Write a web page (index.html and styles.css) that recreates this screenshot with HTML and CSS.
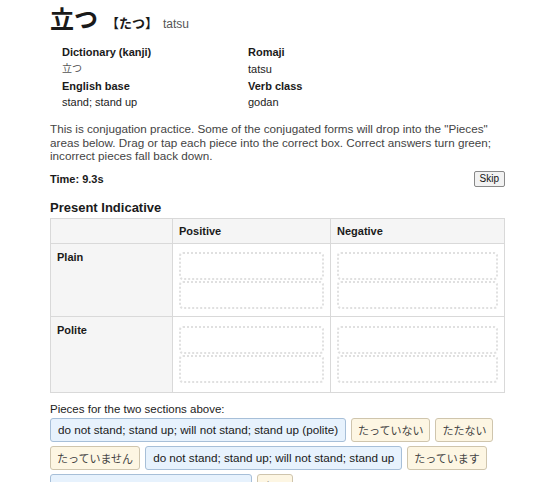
FILE: index.html
```html
<!DOCTYPE html>
<html lang="en">
<head>
<meta charset="utf-8">
<link rel="stylesheet" href="styles.css">
</head>
<body>
<div class="page">
  <h1 class="title"><span class="kanji">立つ</span><span class="kana">【たつ】</span><span class="romaji">tatsu</span></h1>
  <div class="info">
    <div class="info-col">
      <div class="label">Dictionary (kanji)</div>
      <div class="value jpv">立つ</div>
      <div class="label">English base</div>
      <div class="value">stand; stand up</div>
    </div>
    <div class="info-col">
      <div class="label">Romaji</div>
      <div class="value tall">tatsu</div>
      <div class="label">Verb class</div>
      <div class="value">godan</div>
    </div>
  </div>
  <p class="intro">This is conjugation practice. Some of the conjugated forms will drop into the "Pieces" areas below. Drag or tap each piece into the correct box. Correct answers turn green; incorrect pieces fall back down.</p>
  <div class="timer-row">
    <span class="timer">Time: 9.3s</span>
    <button class="skip">Skip</button>
  </div>
  <h2 class="section">Present Indicative</h2>
  <table class="conj">
    <thead>
      <tr><th class="corner"></th><th class="pos">Positive</th><th class="neg">Negative</th></tr>
    </thead>
    <tbody>
      <tr class="plain">
        <th class="rowhead">Plain</th>
        <td><div class="drop"></div><div class="drop"></div></td>
        <td><div class="drop"></div><div class="drop"></div></td>
      </tr>
      <tr class="polite">
        <th class="rowhead">Polite</th>
        <td><div class="drop"></div><div class="drop"></div></td>
        <td><div class="drop"></div><div class="drop"></div></td>
      </tr>
    </tbody>
  </table>
  <div class="pieces-label">Pieces for the two sections above:</div>
  <div class="pieces">
    <span class="chip en">do not stand; stand up; will not stand; stand up (polite)</span>
    <span class="chip jp">たっていない</span>
    <span class="chip jp">たたない</span>
    <span class="chip jp">たっていません</span>
    <span class="chip en">do not stand; stand up; will not stand; stand up</span>
    <span class="chip jp">たっています</span>
    <span class="chip en">stand; stand up; will stand; stand up</span>
    <span class="chip jp">たつ</span>
  </div>
</div>
</body>
</html>
```
FILE: styles.css
```css
html, body {
  margin: 0;
  padding: 0;
  background: #fff;
}
body {
  font-family: "Liberation Sans", Arial, "Noto Sans CJK JP", sans-serif;
  color: #1a1a1a;
  font-size: 11px;
}
.page {
  padding: 0 47px 0 50px;
}
.title {
  margin: 0;
  height: 31px;
  display: flex;
  align-items: baseline;
  font-weight: bold;
}
.kanji {
  font-size: 24px;
  line-height: normal;
  font-family: "Noto Sans CJK JP", sans-serif;
  font-weight: bold;
}
.kana {
  font-size: 13px;
  font-family: "Noto Sans CJK JP", sans-serif;
  font-weight: bold;
  margin-left: 8px;
}
.romaji {
  font-size: 12px;
  color: #555;
  font-weight: normal;
  margin-left: 5px;
}
.info {
  display: grid;
  grid-template-columns: 186px 186px;
  margin: 13px 0 0 12px;
}
.label {
  font-weight: bold;
  line-height: 16px;
}
.value {
  line-height: 16px;
  color: #222;
}
.jpv {
  font-size: 10px;
  color: #555;
  line-height: 18px;
}
.tall {
  line-height: 18px;
}
.intro {
  margin: 12px 0 0;
  color: #444;
  font-size: 11.7px;
  line-height: 13.5px;
}
.timer-row {
  display: flex;
  justify-content: space-between;
  align-items: center;
  margin-top: 8px;
}
.timer {
  font-weight: bold;
}
.skip {
  font-family: "Liberation Sans", Arial, sans-serif;
  font-size: 10px;
  padding: 1px 5px;
  background: #f2f2f2;
  border: 1px solid #888;
  border-radius: 2px;
  color: #111;
  height: 16px;
}
.section {
  margin: 13px 0 3px;
  font-size: 13px;
  font-weight: bold;
}
.conj {
  width: 100%;
  border-collapse: collapse;
  border: 1px solid #d9d9d9;
}
.conj th, .conj td {
  border: 1px solid #d9d9d9;
  text-align: left;
  vertical-align: top;
}
.conj thead th {
  background: #f5f5f5;
  height: 24px;
  padding: 0 6px;
  vertical-align: middle;
  font-weight: bold;
}
.corner { width: 109px; }
.pos { width: 145px; }
.rowhead {
  background: #f5f5f5;
  padding: 7px 6px;
  font-weight: bold;
}
.conj td {
  padding: 8px 6px 7px;
}
.polite td { padding-top: 9px; padding-bottom: 9px; }
.drop {
  height: 24px;
  border: 2px dotted #e0e0e0;
  border-radius: 4px;
}
.drop + .drop {
  margin-top: 1px;
}
.pieces-label {
  margin-top: 10px;
  color: #222;
  font-size: 11.5px;
}
.pieces {
  display: flex;
  flex-wrap: wrap;
  gap: 4px 5px;
  margin-top: 3px;
}
.chip {
  display: inline-block;
  height: 22px;
  line-height: 22px;
  padding: 0 7px;
  border-radius: 3px;
  white-space: nowrap;
}
.chip.en {
  background: #e7f2fd;
  border: 1px solid #a7bfd8;
  font-size: 11.7px;
  color: #1a1a1a;
}
.chip.jp {
  background: #fdf6e3;
  border: 1px solid #cfc5ad;
  font-size: 11px;
  padding: 0 6px;
  font-family: "Noto Sans CJK JP", sans-serif;
  color: #444;
}
```
